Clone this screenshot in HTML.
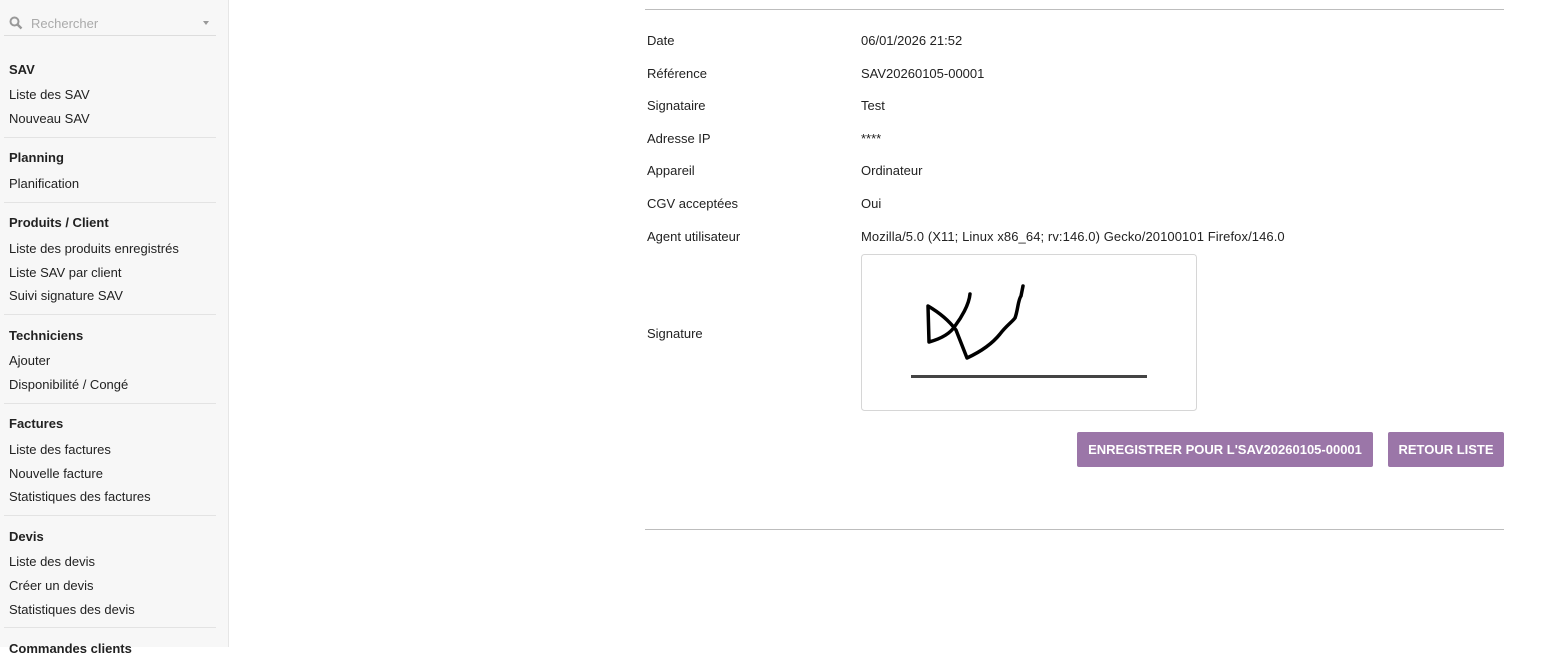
<!DOCTYPE html>
<html><head><meta charset="utf-8"><style>
*{margin:0;padding:0;box-sizing:border-box}
body{width:1563px;height:647px;overflow:hidden;background:#fff;font-family:"Liberation Sans",sans-serif;font-size:13px;color:#222;position:relative}
#sb{position:absolute;left:0;top:0;width:229px;height:647px;background:#f7f7f7;border-right:1px solid #e6e6e6}
.t{position:absolute;line-height:16px;white-space:nowrap;margin-top:1px}
.h{font-weight:bold}
.sep{position:absolute;left:4px;width:212px;height:1px;background:#e3e3e3}
.hr{position:absolute;left:645px;width:859px;height:1px;background:#bdbdbd}
.btn{position:absolute;top:432px;height:35px;background:#9b76a8;color:#fff;font-weight:bold;font-size:13px;line-height:35px;text-align:center;border-radius:2px}
</style></head><body>
<div id="sb">
<svg style="position:absolute;left:9px;top:16px" width="14" height="14" viewBox="0 0 14 14"><circle cx="5.5" cy="5.5" r="4" fill="none" stroke="#999" stroke-width="2"/><line x1="8.5" y1="8.5" x2="12.5" y2="12.5" stroke="#999" stroke-width="2.4"/></svg>
<div class="t" style="left:31px;top:15px;color:#aaa">Rechercher</div>
<div style="position:absolute;left:203px;top:21px;border-left:3px solid transparent;border-right:3px solid transparent;border-top:4px solid #999"></div>
<div class="sep" style="top:35px;background:#ddd"></div>
<div class="t h" style="left:9px;top:61px">SAV</div>
<div class="t" style="left:9px;top:86px">Liste des SAV</div>
<div class="t" style="left:9px;top:110px">Nouveau SAV</div>
<div class="sep" style="top:137px"></div>
<div class="t h" style="left:9px;top:149px">Planning</div>
<div class="t" style="left:9px;top:175px">Planification</div>
<div class="sep" style="top:202px"></div>
<div class="t h" style="left:9px;top:214px">Produits / Client</div>
<div class="t" style="left:9px;top:240px">Liste des produits enregistrés</div>
<div class="t" style="left:9px;top:264px">Liste SAV par client</div>
<div class="t" style="left:9px;top:287px">Suivi signature SAV</div>
<div class="sep" style="top:314px"></div>
<div class="t h" style="left:9px;top:327px">Techniciens</div>
<div class="t" style="left:9px;top:352px">Ajouter</div>
<div class="t" style="left:9px;top:376px">Disponibilité / Congé</div>
<div class="sep" style="top:403px"></div>
<div class="t h" style="left:9px;top:415px">Factures</div>
<div class="t" style="left:9px;top:441px">Liste des factures</div>
<div class="t" style="left:9px;top:465px">Nouvelle facture</div>
<div class="t" style="left:9px;top:488px">Statistiques des factures</div>
<div class="sep" style="top:515px"></div>
<div class="t h" style="left:9px;top:528px">Devis</div>
<div class="t" style="left:9px;top:553px">Liste des devis</div>
<div class="t" style="left:9px;top:577px">Créer un devis</div>
<div class="t" style="left:9px;top:601px">Statistiques des devis</div>
<div class="sep" style="top:627px"></div>
<div class="t h" style="left:9px;top:640px">Commandes clients</div>
</div>
<div class="hr" style="top:9px"></div>
<div class="hr" style="top:529px"></div>
<div class="t" style="left:647px;top:32px">Date</div><div class="t" style="left:861px;top:32px">06/01/2026 21:52</div>
<div class="t" style="left:647px;top:65px">Référence</div><div class="t" style="left:861px;top:65px">SAV20260105-00001</div>
<div class="t" style="left:647px;top:97px">Signataire</div><div class="t" style="left:861px;top:97px">Test</div>
<div class="t" style="left:647px;top:130px">Adresse IP</div><div class="t" style="left:861px;top:130px">****</div>
<div class="t" style="left:647px;top:162px">Appareil</div><div class="t" style="left:861px;top:162px">Ordinateur</div>
<div class="t" style="left:647px;top:195px">CGV acceptées</div><div class="t" style="left:861px;top:195px">Oui</div>
<div class="t" style="left:647px;top:228px">Agent utilisateur</div><div class="t" style="left:861px;top:228px;letter-spacing:0.09px">Mozilla/5.0 (X11; Linux x86_64; rv:146.0) Gecko/20100101 Firefox/146.0</div>
<div class="t" style="left:647px;top:325px">Signature</div>
<svg style="position:absolute;left:0;top:0" width="1563" height="647">
<rect x="861.5" y="254.5" width="335" height="156" rx="3" fill="#fff" stroke="#d6d6d6"/>
<path d="M970,294 C969,305 961,318 955,326 C950,334 940,339 929,342 L928,306 C940,313 950,322 956,330 L967,358 C980,352 992,344 1000,334 C1006,326 1012,322 1015,318 C1018,310 1018,300 1021,296 L1023,286" fill="none" stroke="#000" stroke-width="3.5" stroke-linejoin="round" stroke-linecap="round"/>
<line x1="911" y1="376.5" x2="1147" y2="376.5" stroke="#444" stroke-width="3"/>
</svg>
<div class="btn" style="left:1077px;width:296px">ENREGISTRER POUR L'SAV20260105-00001</div>
<div class="btn" style="left:1388px;width:116px">RETOUR LISTE</div>
</body></html>
